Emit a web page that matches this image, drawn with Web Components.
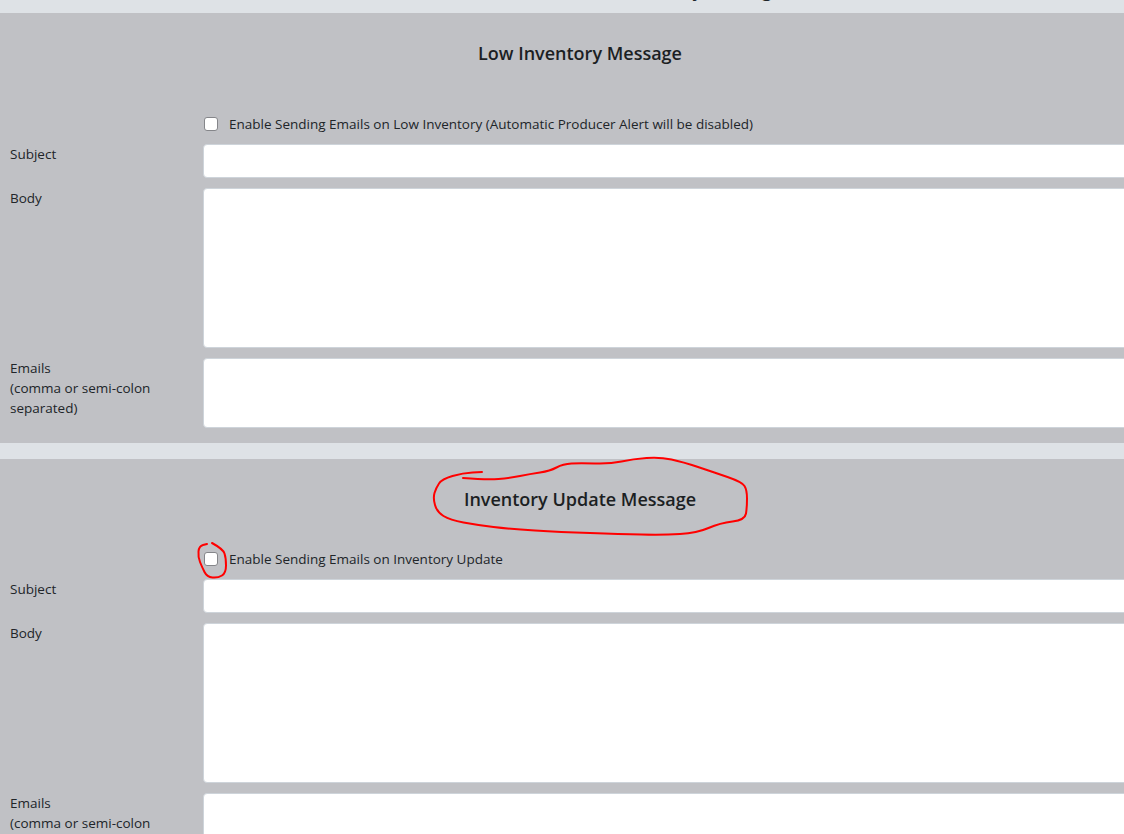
<!DOCTYPE html>
<html>
<head>
<meta charset="utf-8">
<title>Inventory Messages</title>
<style>
  html, body { margin: 0; height: 100%; overflow: hidden; background: #dee2e6; }
  body { font: 13.5px/20px "Open Sans", "Liberation Sans", sans-serif; color: #212529; }
</style>
</head>
<body>
<settings-page>
  <page-strip>Inventory Message</page-strip>
  <message-section title="Low Inventory Message" check="Enable Sending Emails on Low Inventory (Automatic Producer Alert will be disabled)" spaced></message-section>
  <message-section title="Inventory Update Message" check="Enable Sending Emails on Inventory Update"></message-section>
  <ink-marks></ink-marks>
</settings-page>

<script>
class SettingsPage extends HTMLElement {
    connectedCallback() {
        this.attachShadow({ mode: 'open' });
        this.shadowRoot.innerHTML = `
            <style>
                :host { display: block; position: relative; height: 834px; overflow: hidden; }
                .column { display: flex; flex-direction: column; gap: 16px; width: 1160px; }
                ::slotted(*) { flex: none; }
            </style>
            <div class="column"><slot></slot></div>
        `;
    }
}

// the bit of the previous section's heading still visible above the fold
class PageStrip extends HTMLElement {
    connectedCallback() {
        this.attachShadow({ mode: 'open' });
        this.shadowRoot.innerHTML = `
            <style>
                :host { display: flex; align-items: flex-end; justify-content: flex-end; height: 13px; margin-bottom: -16px; overflow: hidden; padding-right: 378px; }
                span { font-size: 18px; line-height: 27px; font-weight: 600; margin-bottom: 9px; flex: none; }
            </style>
            <span><slot></slot></span>
        `;
    }
}

class FormRow extends HTMLElement {
    connectedCallback() {
        this.attachShadow({ mode: 'open' });
        this.shadowRoot.innerHTML = `
            <style>
                :host { display: grid; grid-template-columns: 203px 1fr; }
                .label { padding: 0 10px; }
                .control { min-width: 0; }
            </style>
            <div class="label"><slot name="label"></slot></div>
            <div class="control"><slot></slot></div>
        `;
    }
}

class TextBox extends HTMLElement {
    connectedCallback() {
        const h = this.getAttribute('height') || 34;
        this.attachShadow({ mode: 'open' });
        this.shadowRoot.innerHTML = `
            <style>
                :host { display: block; }
                textarea { display: block; box-sizing: border-box; width: 100%; height: ${h}px; background: #fff; border: 1px solid #ced4da; border-radius: 4px; resize: none; padding: 0; margin: 0; }
            </style>
            <textarea></textarea>
        `;
    }
}

class MessageSection extends HTMLElement {
    connectedCallback() {
        const title = this.getAttribute('title');
        const check = this.getAttribute('check');
        this.attachShadow({ mode: 'open' });
        this.shadowRoot.innerHTML = `
            <style>
                :host { display: block; background: #c0c1c5; padding: 27px 0 15px; }
                h2 { margin: 0; font-size: 18px; line-height: 27px; font-weight: 600; text-align: center; color: #1c1f23; }
                :host([spaced]) .check { margin-top: 47px; }
                .check { display: flex; align-items: center; height: 20px; margin-top: 36px; margin-bottom: 10px; margin-left: 204px; }
                input { appearance: none; box-sizing: border-box; width: 14px; height: 14px; margin: 0 11px 0 0; flex: none; background: #fff; border: 1.5px solid #85868a; border-radius: 3px; }
                .rows { display: flex; flex-direction: column; gap: 10px; }
            </style>
            <h2>${title}</h2>
            <label class="check"><input type="checkbox"><span>${check}</span></label>
            <div class="rows">
                <form-row><span slot="label">Subject</span><text-box height="34"></text-box></form-row>
                <form-row><span slot="label">Body</span><text-box height="160"></text-box></form-row>
                <form-row><span slot="label">Emails<br>(comma or semi-colon separated)</span><text-box height="70"></text-box></form-row>
            </div>
        `;
    }
}

// red pen annotations scribbled over the screenshot
class InkMarks extends HTMLElement {
    connectedCallback() {
        const smooth = pts => {
            let d = `M${pts[0][0]} ${pts[0][1]}`;
            for (let i = 1; i < pts.length - 1; i++) {
                const mx = (pts[i][0] + pts[i + 1][0]) / 2;
                const my = (pts[i][1] + pts[i + 1][1]) / 2;
                d += ` Q${pts[i][0]} ${pts[i][1]} ${mx} ${my}`;
            }
            const last = pts[pts.length - 1];
            return d + ` L${last[0]} ${last[1]}`;
        };
        const title = [[463,478],[487,480],[510,478],[530,474],[550,471],[563,464],[580,463],[610,464],[633,459],[660,457],[683,462],[713,472],[742,482],[747,490],[747,507],[745,520],[720,523],[697,533],[663,535],[620,534],[560,532],[510,529],[477,525],[450,520],[437,512],[433,498],[436,488],[442,479],[463,473],[482,472]];
        const box = [[212,543],[223,549],[226,558],[226,573],[218,578],[207,577],[202,567],[198,557],[199,546],[207,544]];
        this.attachShadow({ mode: 'open' });
        this.shadowRoot.innerHTML = `
            <style>
                :host { position: absolute; inset: 0; pointer-events: none; }
                svg { display: block; }
                path { fill: none; stroke: #f00; stroke-width: 2; stroke-linecap: round; stroke-linejoin: round; }
            </style>
            <svg width="1124" height="834" viewBox="0 0 1124 834">
                <path d="${smooth(title)}"/>
                <path d="${smooth(box)}"/>
            </svg>
        `;
    }
}

customElements.define('settings-page', SettingsPage);
customElements.define('page-strip', PageStrip);
customElements.define('form-row', FormRow);
customElements.define('text-box', TextBox);
customElements.define('message-section', MessageSection);
customElements.define('ink-marks', InkMarks);
</script>
</body>
</html>
